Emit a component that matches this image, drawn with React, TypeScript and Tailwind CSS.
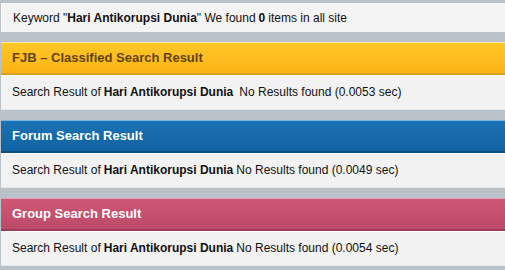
import React from "react";

interface Section {
  title: string;
  time: string;
  header: string;
  titleColor: string;
  gap?: boolean;
}

const keyword = "Hari Antikorupsi Dunia";

const sections: Section[] = [
  {
    title: "FJB – Classified Search Result",
    time: "0.0053",
    header:
      "bg-gradient-to-b from-[#ffc727] to-[#fdb314] border-t border-t-[#ffe9a0] border-b-2 border-b-[#d9a020]",
    titleColor: "text-[#5e4414]",
    gap: true,
  },
  {
    title: "Forum Search Result",
    time: "0.0049",
    header:
      "bg-gradient-to-b from-[#1c72b3] to-[#1263a3] border-t border-t-[#7fb6de] border-b-2 border-b-[#0d4f80]",
    titleColor: "text-white",
  },
  {
    title: "Group Search Result",
    time: "0.0054",
    header:
      "bg-gradient-to-b from-[#cf5775] to-[#bb4b68] border-t border-t-[#e9a2b3] border-b-2 border-b-[#9c3a53]",
    titleColor: "text-white",
  },
];

const ResultBox = ({ s }: { s: Section }) => (
  <div className="flex flex-col">
    <div className={`h-[33px] flex items-center pl-[11px] pb-[1px] ${s.header}`}>
      <span className={`font-bold text-[13px] ${s.titleColor}`}>{s.title}</span>
    </div>
    <div className="h-[35px] bg-[#f2f2f2] border-t border-t-white border-b border-b-[#e4e6e8] flex items-center pl-[11px] pb-[1px] text-[12px] text-[#111]">
      <span>Search Result of </span>
      <b className="ml-[3px]">{keyword}</b>
      <span className={s.gap ? "ml-[6px]" : "ml-[3px]"}>No Results found ({s.time} sec)</span>
    </div>
  </div>
);

export default function App() {
  return (
    <div
      className="w-[505px] h-[270px] overflow-hidden bg-[#b8c2c8] pt-[3px] pl-[1px] flex flex-col gap-[10px]"
      style={{ fontFamily: '"Liberation Sans", Arial, sans-serif' }}
    >
      <div className="h-[29px] bg-[#f4f4f4] border-l border-l-white flex items-center pl-[11px] text-[12px] text-[#111]">
        <span>Keyword "</span>
        <b>{keyword}</b>
        <span>" We found </span>
        <b className="mx-[3px]">0</b>
        <span>items in all site</span>
      </div>
      {sections.map((s, i) => (
        <ResultBox key={i} s={s} />
      ))}
    </div>
  );
}
